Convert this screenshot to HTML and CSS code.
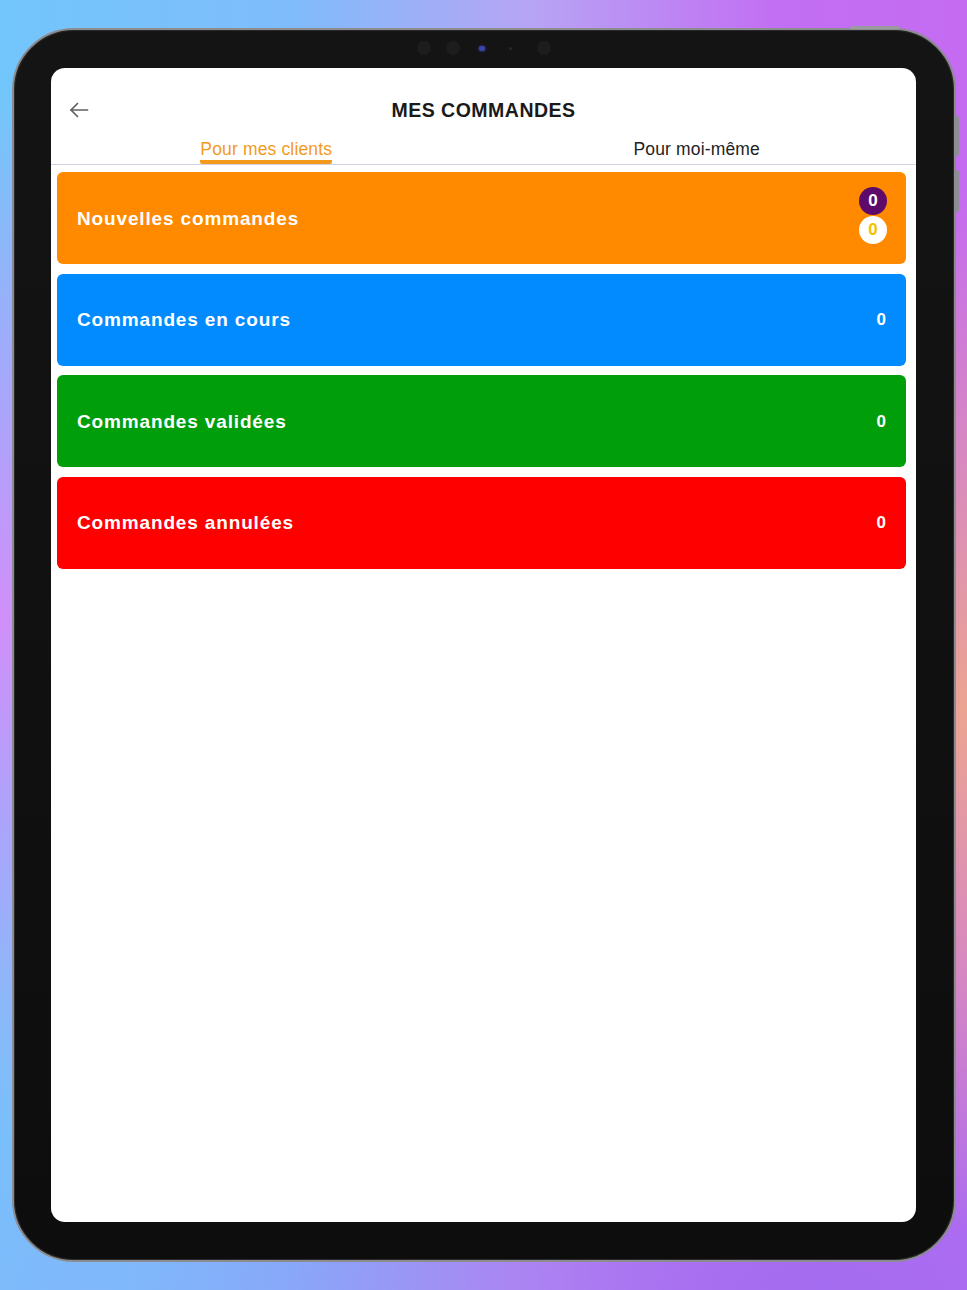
FILE: index.html
```html
<!DOCTYPE html>
<html lang="fr">
<head>
<meta charset="utf-8">
<title>Mes commandes</title>
<link rel="stylesheet" href="styles.css">
</head>
<body>
<div class="bg">
  <div class="device">
    <span class="btn-top"></span>
    <span class="btn-side btn-side-1"></span>
    <span class="btn-side btn-side-2"></span>
    <div class="cams">
      <span class="cam"></span>
      <span class="cam"></span>
      <span class="cam-lens"></span>
      <span class="cam-dot"></span>
      <span class="cam"></span>
    </div>
    <div class="screen">
      <div class="header">
        <div class="back">
          <svg width="20" height="16" viewBox="0 0 20 16" fill="none" stroke="#5f5f5f" stroke-width="1.7" stroke-linecap="round" stroke-linejoin="round">
            <path d="M18.5 8H2"/>
            <path d="M8.5 1.5L2 8l6.5 6.5"/>
          </svg>
        </div>
        <div class="title">MES COMMANDES</div>
        <div class="spacer"></div>
      </div>
      <div class="tabs">
        <div class="tab active"><span class="tab-label">Pour mes clients</span></div>
        <div class="tab"><span class="tab-label">Pour moi-même</span></div>
      </div>
      <div class="cards">
        <div class="card card-orange">
          <span class="card-title">Nouvelles commandes</span>
          <div class="badges">
            <span class="badge badge-purple">0</span>
            <span class="badge badge-white">0</span>
          </div>
        </div>
        <div class="card card-blue">
          <span class="card-title">Commandes en cours</span>
          <span class="count">0</span>
        </div>
        <div class="card card-green">
          <span class="card-title">Commandes validées</span>
          <span class="count">0</span>
        </div>
        <div class="card card-red">
          <span class="card-title">Commandes annulées</span>
          <span class="count">0</span>
        </div>
      </div>
    </div>
  </div>
</div>
</body>
</html>
```

FILE: styles.css
```css
* { box-sizing: border-box; }

html, body {
  margin: 0;
  padding: 0;
}

body {
  width: 967px;
  height: 1290px;
  overflow: hidden;
  font-family: "Liberation Sans", Arial, sans-serif;
}

.bg {
  width: 967px;
  height: 1290px;
  padding-top: 28px;
  padding-left: 12px;
  background:
    radial-gradient(ellipse 260px 520px at 0% 48%, rgba(214, 140, 250, 0.95), rgba(214, 140, 250, 0) 100%),
    radial-gradient(ellipse 240px 520px at 100% 55%, rgba(238, 168, 140, 0.95), rgba(238, 168, 140, 0) 100%),
    radial-gradient(ellipse 700px 360px at 85% 100%, rgba(164, 108, 240, 1), rgba(164, 108, 240, 0) 100%),
    radial-gradient(ellipse 420px 300px at 10% 100%, rgba(128, 184, 251, 1), rgba(128, 184, 251, 0) 100%),
    linear-gradient(90deg, #72c6fb 0%, #7fbcfb 30%, #b7a4f4 55%, #c26ff3 80%, #c46bf2 100%);
}

.device {
  position: relative;
  width: 944px;
  height: 1234px;
  border-radius: 62px;
  border: 2px solid #8b8b90;
  background: linear-gradient(180deg, #141414 0%, #0d0d0d 100%);
  box-shadow: inset 0 0 0 1px #2a2a2a;
  padding: 38px 38px 38px 37px;
}

.btn-top {
  position: absolute;
  top: -4px;
  left: 836px;
  width: 50px;
  height: 3px;
  background: #9a9aa0;
  border-radius: 2px 2px 0 0;
}

.btn-side {
  position: absolute;
  right: -5px;
  width: 3px;
  background: #8e8e96;
  border-radius: 0 2px 2px 0;
}
.btn-side-1 { top: 86px; height: 40px; }
.btn-side-2 { top: 140px; height: 42px; }

.cams {
  position: absolute;
  top: 11px;
  left: 403px;
  display: flex;
  align-items: center;
  height: 14px;
}

.cam {
  width: 14px;
  height: 14px;
  border-radius: 50%;
  background: #1d1d1d;
  margin-right: 15px;
}
.cam:last-child { margin-right: 0; }

.cam-lens {
  width: 6px;
  height: 5px;
  border-radius: 2px;
  background: #3a45a8;
  box-shadow: 0 0 3px #3a45a8;
  margin: 0 24px 0 4px;
}

.cam-dot {
  width: 3px;
  height: 3px;
  border-radius: 50%;
  background: #2a2a2a;
  margin-right: 25px;
}

.screen {
  width: 865px;
  height: 1154px;
  background: #ffffff;
  border-radius: 14px;
  overflow: hidden;
  display: flex;
  flex-direction: column;
}

.header {
  display: grid;
  grid-template-columns: 60px 1fr 60px;
  align-items: center;
  height: 56px;
  padding-top: 28px;
}

.back {
  display: flex;
  align-items: center;
  padding-left: 18px;
  height: 28px;
}

.title {
  text-align: center;
  font-family: "Liberation Sans", Arial, sans-serif;
  font-weight: 700;
  font-size: 19.5px;
  letter-spacing: 0.5px;
  line-height: 28px;
  color: #1a1a1a;
}

.tabs {
  display: flex;
  height: 41px;
  padding-right: 4px;
  border-bottom: 1px solid #d6d4e4;
}

.tab {
  flex: 1;
  display: flex;
  justify-content: center;
  padding-top: 15px;
}

.tab-label {
  display: block;
  height: 25px;
  font-size: 17.5px;
  line-height: 20px;
  letter-spacing: 0.15px;
  color: #222222;
}

.tab.active .tab-label {
  color: #f39a1c;
  border-bottom: 4px solid #f39a1c;
  border-radius: 0 0 2px 2px;
}

.cards {
  display: flex;
  flex-direction: column;
  gap: 9.6px;
  padding: 7px 10px 0 6px;
}

.card {
  height: 92px;
  border-radius: 6px;
  display: flex;
  align-items: center;
  justify-content: space-between;
  padding: 1px 20px 0 20px;
  color: #ffffff;
}

.card-orange { background: #ff8a00; }
.card-blue { background: #028bff; }
.card-green { background: #009e0b; }
.card-red { background: #ff0000; }

.card-title {
  font-weight: 700;
  font-size: 19px;
  letter-spacing: 0.85px;
}

.count {
  font-weight: 700;
  font-size: 17px;
}

.badges {
  display: flex;
  flex-direction: column;
  gap: 1px;
  margin-top: -7px;
  margin-right: -1px;
}

.badge {
  width: 28px;
  height: 28px;
  border-radius: 50%;
  display: flex;
  align-items: center;
  justify-content: center;
  font-weight: 700;
  font-size: 17px;
}

.badge-purple {
  background: #5e0a6a;
  color: #ffffff;
}

.badge-white {
  background: #ffffff;
  color: #f5bf00;
}
```
